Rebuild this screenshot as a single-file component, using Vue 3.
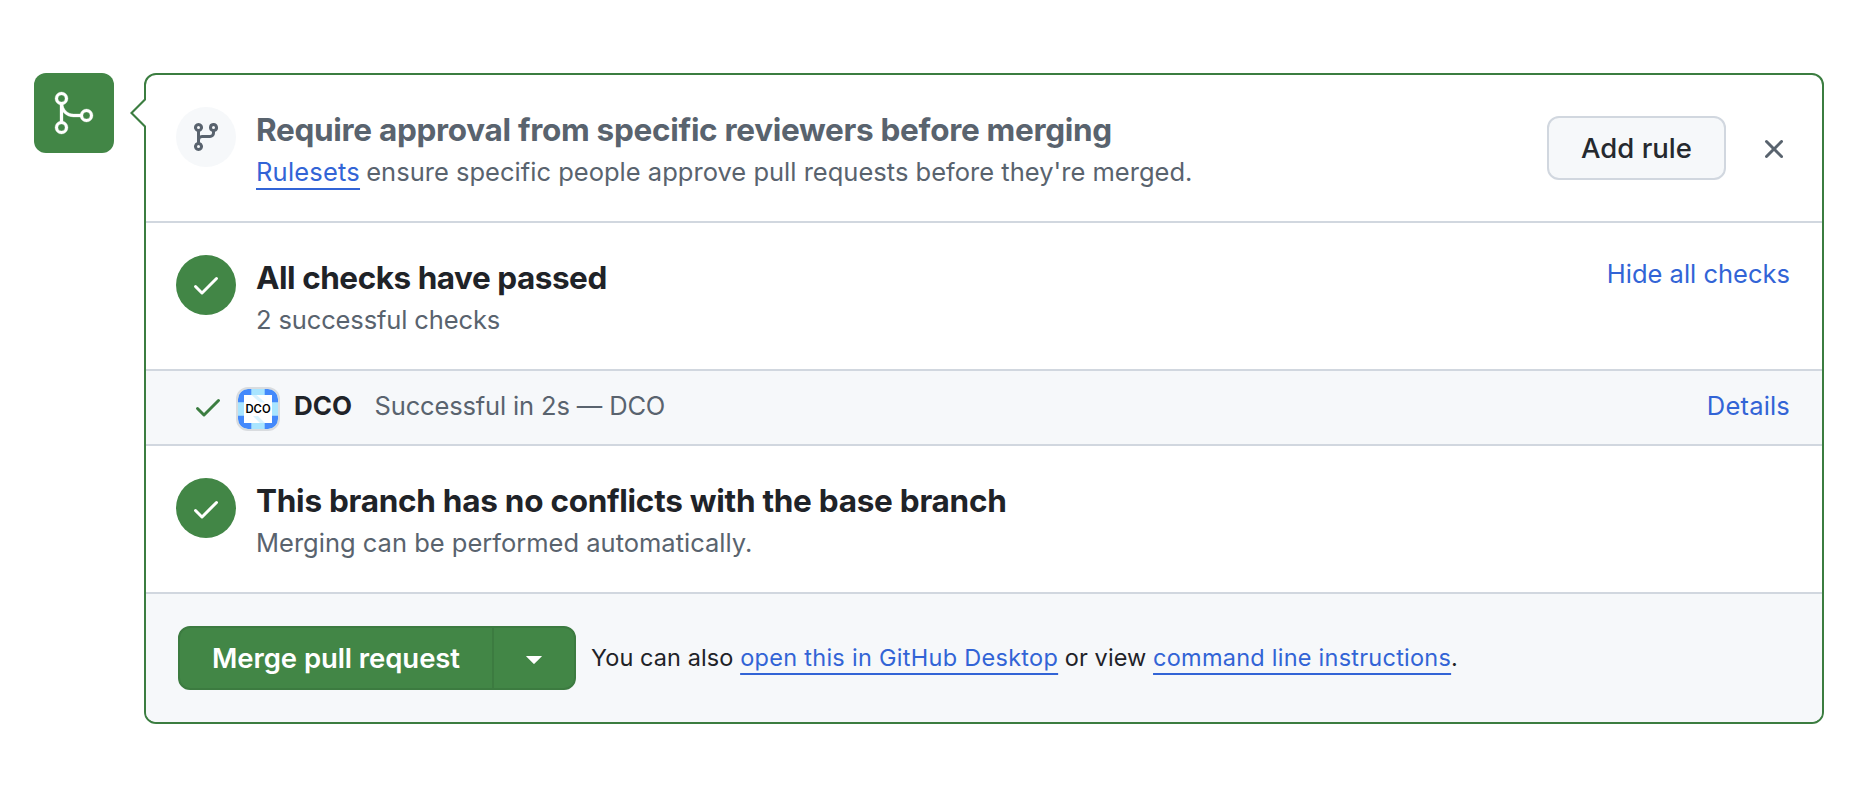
<script setup>
const CHECK =
  'M13.78 4.22a.75.75 0 0 1 0 1.06l-7.25 7.25a.75.75 0 0 1-1.06 0L2.22 9.28a.751.751 0 0 1 .018-1.042.751.751 0 0 1 1.042-.018L6 10.94l6.72-6.72a.75.75 0 0 1 1.06 0Z'
</script>

<template>
  <main class="merge">
    <div class="badge">
      <svg width="48" height="48" viewBox="0 0 24 24" fill="currentColor" stroke="currentColor" stroke-width=".15">
        <path d="M15 13.25a3.25 3.25 0 1 1 6.5 0 3.25 3.25 0 0 1-6.5 0Zm-12.5 6a3.25 3.25 0 1 1 6.5 0 3.25 3.25 0 0 1-6.5 0Zm0-14.5a3.25 3.25 0 1 1 6.5 0 3.25 3.25 0 0 1-6.5 0ZM5.75 6.5a1.75 1.75 0 1 0-.001-3.501A1.75 1.75 0 0 0 5.75 6.5Zm0 14.5a1.75 1.75 0 1 0-.001-3.501A1.75 1.75 0 0 0 5.75 21Zm12.5-6a1.75 1.75 0 1 0-.001-3.501A1.75 1.75 0 0 0 18.25 15Z" />
        <path d="M6.5 7.25c0 2.9 2.35 5.25 5.25 5.25h4.5V14h-4.5A6.75 6.75 0 0 1 5 7.25Z" />
        <path d="M5.75 16.75A.75.75 0 0 1 5 16V8a.75.75 0 0 1 1.5 0v8a.75.75 0 0 1-.75.75Z" />
      </svg>
    </div>

    <section class="box">
      <svg class="pointer" width="16" height="32" viewBox="0 0 16 32">
        <path d="M16 0 0 16l16 16Z" fill="#3b7d40" />
        <path d="M16 3 3 16l13 13Z" fill="#fff" />
      </svg>

      <div class="row">
        <span class="status muted">
          <svg width="32" height="32" viewBox="0 0 16 16" fill="currentColor">
            <path d="M9.5 3.25a2.25 2.25 0 1 1 3 2.122V6A2.5 2.5 0 0 1 10 8.5H6a1 1 0 0 0-1 1v1.128a2.251 2.251 0 1 1-1.5 0V5.372a2.25 2.25 0 1 1 1.5 0v1.836A2.493 2.493 0 0 1 6 7h4a1 1 0 0 0 1-1v-.628A2.25 2.25 0 0 1 9.5 3.25Zm-6 0a.75.75 0 1 0 1.5 0 .75.75 0 0 0-1.5 0Zm8.25-.75a.75.75 0 1 0 0 1.5.75.75 0 0 0 0-1.5ZM4.25 12a.75.75 0 1 0 0 1.5.75.75 0 0 0 0-1.5Z" />
          </svg>
        </span>
        <div class="body">
          <h3 class="soft">Require approval from specific reviewers before merging</h3>
          <p class="rules"><a class="line">Rulesets</a> ensure specific people approve pull requests before they're merged.</p>
        </div>
        <button class="add">Add rule</button>
        <button class="close" aria-label="Dismiss">
          <svg width="32" height="32" viewBox="0 0 16 16" fill="currentColor">
            <path d="M3.72 3.72a.75.75 0 0 1 1.06 0L8 6.94l3.22-3.22a.749.749 0 0 1 1.275.326.749.749 0 0 1-.215.734L9.06 8l3.22 3.22a.749.749 0 0 1-.326 1.275.749.749 0 0 1-.734-.215L8 9.06l-3.22 3.22a.751.751 0 0 1-1.042-.018.751.751 0 0 1-.018-1.042L6.94 8 3.72 4.78a.75.75 0 0 1 0-1.06Z" />
          </svg>
        </button>
      </div>

      <div class="row">
        <span class="status">
          <svg width="32" height="32" viewBox="0 0 16 16" fill="currentColor"><path :d="CHECK" /></svg>
        </span>
        <div class="body">
          <h3 class="passed">All checks have passed</h3>
          <p class="count">2 successful checks</p>
        </div>
        <a class="hide">Hide all checks</a>
      </div>

      <div class="check">
        <svg class="tick" width="32" height="32" viewBox="0 0 16 16" fill="currentColor"><path :d="CHECK" /></svg>
        <span class="app">
          <svg class="tile" width="40" height="40" viewBox="0 0 40 40">
            <path d="M0 0h40v40H0z" fill="#a9e5ff" />
            <path d="M0 0h13.3v13.3H0zM26.7 0H40v13.3H26.7zM0 26.7h13.3V40H0zM26.7 26.7H40V40H26.7z" fill="#4489fb" />
            <path d="M6 6h28v28H6z" fill="#fff" />
            <path d="M13.5 6h5L27 13.5h-5zM15 27h5l7 7h-5z" fill="#d9f3ff" />
          </svg>
          <b class="mark">DCO</b>
        </span>
        <strong class="name">DCO</strong>
        <span class="result">Successful in 2s — DCO</span>
        <a class="details">Details</a>
      </div>

      <div class="row">
        <span class="status low">
          <svg width="32" height="32" viewBox="0 0 16 16" fill="currentColor"><path :d="CHECK" /></svg>
        </span>
        <div class="body">
          <h3>This branch has no conflicts with the base branch</h3>
          <p class="auto">Merging can be performed automatically.</p>
        </div>
      </div>

      <div class="foot">
        <div class="group">
          <button class="primary">Merge pull request</button>
          <button class="more" aria-label="Select merge method">
            <svg width="16" height="8" viewBox="0 0 16 8" fill="currentColor">
              <path d="M.5 0h15q.6.1.2.6L8.4 7.8q-.4.3-.8 0L.3.6Q-.1.1.5 0Z" />
            </svg>
          </button>
        </div>
        <p class="also">You can also <a class="line desktop">open this in GitHub Desktop</a> or view <a class="line cli">command line instructions</a>.</p>
      </div>
    </section>
  </main>
</template>

<style>
body {
  background: #fff;
}
</style>

<style scoped>
.merge {
  display: flex;
  align-items: flex-start;
  gap: 30px;
  box-sizing: border-box;
  width: 1868px;
  height: 790px;
  padding: 73px 44px 0 34px;
  font-family: Inter, "Open Sans", sans-serif;
  font-size: 25.5px;
  color: #1f2328;
}
.merge * {
  box-sizing: border-box;
}
svg {
  display: block;
  flex: none;
}
h3,
p {
  margin: 0;
  white-space: nowrap;
}
button {
  margin: 0;
  padding: 0;
  font: inherit;
}
a {
  color: #3264d6;
  white-space: nowrap;
}
.badge {
  display: grid;
  place-items: center;
  flex: none;
  width: 80px;
  height: 80px;
  border-radius: 12px;
  background: #428646;
  color: #fff;
}
.box {
  position: relative;
  flex: none;
  width: 1680px;
  height: 651px;
  border: 2px solid #3b7d40;
  border-radius: 12px;
}
.pointer {
  position: absolute;
  left: -16px;
  top: 22px;
}
.row {
  display: flex;
  align-items: flex-start;
  height: 148px;
  padding: 32px 32px 0 30px;
  border-bottom: 2px solid #d1d7df;
}
.status {
  display: grid;
  place-items: center;
  flex: none;
  width: 60px;
  height: 60px;
  border-radius: 50%;
  background: #428646;
  color: #fff;
}
.status.muted {
  background: #f6f8fa;
  color: #59636e;
}
.status.low {
  padding-top: 2px;
}
.body {
  flex: 1;
  padding-left: 20px;
}
h3 {
  font-size: 31.5px;
  font-weight: 650;
  line-height: 45px;
  letter-spacing: -0.265px;
}
h3.soft {
  color: #59636e;
  letter-spacing: -0.3px;
}
h3.passed {
  letter-spacing: -0.47px;
}
.body p {
  line-height: 40px;
  color: #59636e;
}
.line {
  text-decoration: underline;
  text-decoration-thickness: 2px;
  text-underline-offset: 7px;
  text-decoration-skip-ink: none;
}
.body .rules {
  letter-spacing: 0.015px;
}
.rules .line {
  margin-right: -1px;
  letter-spacing: 0.2px;
}
.count {
  letter-spacing: -0.13px;
}
.add {
  width: 179px;
  height: 64px;
  margin-top: 9px;
  border: 2px solid #d1d7df;
  border-radius: 12px;
  background: #f6f8fa;
  color: #25292e;
  font-size: 27.5px;
  font-weight: 500;
}
.close {
  margin: 26px 0 0 32px;
  border: 0;
  background: none;
  color: #59636e;
}
.hide {
  line-height: 38px;
}
.check {
  display: flex;
  align-items: flex-start;
  height: 75px;
  padding: 16px 32px 0 46px;
  border-bottom: 2px solid #d1d7df;
  background: #f6f8fa;
  line-height: 38px;
}
.tick {
  margin-top: 4px;
  color: #3b7d40;
}
.app {
  display: grid;
  place-items: center;
  flex: none;
  width: 44px;
  height: 44px;
  margin: 0 14px 0 12px;
  border: 2px solid #d9dcdf;
  border-radius: 12px;
  overflow: hidden;
  background: #d9dcdf;
}
.tile,
.mark {
  grid-area: 1 / 1;
}
.tile {
  border-radius: 10px;
}
.mark {
  font-size: 11.3px;
  font-weight: 600;
  line-height: 40px;
  color: #000;
}
.name {
  width: 80.5px;
  font-size: 26px;
  font-weight: 650;
}
.result {
  flex: 1;
  color: #59636e;
  letter-spacing: -0.15px;
}
.details {
  letter-spacing: 0.18px;
}
.foot {
  display: flex;
  align-items: center;
  height: 128px;
  padding-left: 32px;
  border-radius: 0 0 10px 10px;
  background: #f6f8fa;
}
.group {
  display: flex;
  width: 398px;
  height: 64px;
  overflow: hidden;
  border: 2px solid #3c7b40;
  border-radius: 12px;
  background: #428646;
}
.group button {
  border: 0;
  background: none;
  color: #fff;
}
.group .primary {
  width: 312px;
  font-size: 27.5px;
  font-weight: 600;
  letter-spacing: -0.07px;
}
.group .more {
  display: grid;
  place-items: center;
  flex: 1;
  padding-top: 4px;
  border-left: 2px solid #3c7b40;
}
.also {
  padding-left: 15px;
  font-size: 23.5px;
  line-height: 40px;
  letter-spacing: 0.08px;
}
.desktop {
  letter-spacing: 0.285px;
}
.cli {
  letter-spacing: 0.245px;
}
</style>
